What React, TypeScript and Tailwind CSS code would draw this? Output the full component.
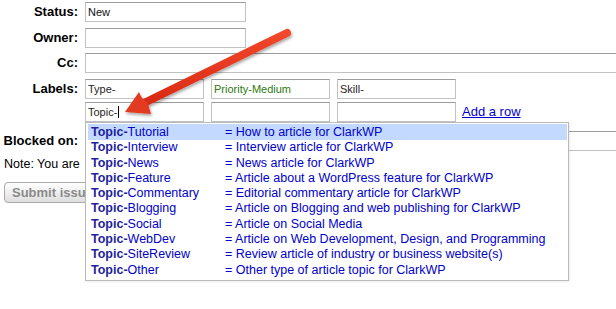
const topics: [string, string][] = [
  ['Tutorial', 'How to article for ClarkWP'],
  ['Interview', 'Interview article for ClarkWP'],
  ['News', 'News article for ClarkWP'],
  ['Feature', 'Article about a WordPress feature for ClarkWP'],
  ['Commentary', 'Editorial commentary article for ClarkWP'],
  ['Blogging', 'Article on Blogging and web publishing for ClarkWP'],
  ['Social', 'Article on Social Media'],
  ['WebDev', 'Article on Web Development, Design, and Programming'],
  ['SiteReview', 'Review article of industry or business website(s)'],
  ['Other', 'Other type of article topic for ClarkWP'],
];

const inputCls =
  'h-[20px] border border-[#c2c2c2] border-t-[#9c9c9c] bg-white px-[2px] text-[11px] leading-[18px] whitespace-nowrap overflow-hidden';

function Label({ children }: { children: React.ReactNode }) {
  return <div className="w-[78px] shrink-0 text-right text-[13px] font-bold text-black">{children}</div>;
}

function Arrow() {
  return (
    <svg className="absolute left-0 top-0 pointer-events-none" width="616" height="309" viewBox="0 0 616 309">
      <defs>
        <linearGradient id="arrowFill" x1="0" y1="0" x2="0" y2="1">
          <stop offset="0" stopColor="#f2472c" />
          <stop offset="1" stopColor="#d92a14" />
        </linearGradient>
        <filter id="arrowShadow" x="-20%" y="-20%" width="140%" height="140%">
          <feDropShadow dx="1" dy="2" stdDeviation="1.6" floodColor="#000" floodOpacity="0.35" />
        </filter>
      </defs>
      <g filter="url(#arrowShadow)">
        <line x1="287" y1="33" x2="146" y2="102" stroke="url(#arrowFill)" strokeWidth="8" strokeLinecap="round" />
        <path d="M125 112 L139 92 Q142 100 148 103 Q149 108 151 114 Z" fill="#e23a20" />
      </g>
    </svg>
  );
}

export default function App() {
  return (
    <div className="relative w-[616px] h-[309px] overflow-hidden bg-white font-['Liberation_Sans',Arial,sans-serif]">
      <div className="pt-[2px]">
        <div className="flex items-center gap-[7px]">
          <Label>Status:</Label>
          <div className={`${inputCls} w-[161px] text-[#111]`}>New</div>
        </div>
        <div className="mt-[6px] flex items-center gap-[7px]">
          <Label>Owner:</Label>
          <div className={`${inputCls} w-[161px]`} />
        </div>
        <div className="mt-[5px] flex items-center gap-[7px]">
          <Label>Cc:</Label>
          <div className={`${inputCls} w-[560px] shrink-0`} />
        </div>
        <div className="mt-[6px] flex items-start gap-[7px]">
          <div className="flex h-[20px] items-center">
            <Label>Labels:</Label>
          </div>
          <div className="flex flex-col gap-[3px]">
            <div className="flex items-center gap-[7px]">
              <div className={`${inputCls} w-[119px] text-[#2a2419]`}>Type-</div>
              <div className={`${inputCls} w-[119px] text-[#2c7a10]`}>Priority-Medium</div>
              <div className={`${inputCls} w-[119px] text-[#2a2419]`}>Skill-</div>
            </div>
            <div className="flex items-center gap-[7px]">
              <div className={`${inputCls} w-[119px] flex items-center text-[#2a2419]`}>
                Topic-
                <span className="ml-[1px] inline-block h-[12px] w-px bg-black" />
              </div>
              <div className={`${inputCls} w-[119px]`} />
              <div className={`${inputCls} w-[119px]`} />
              <a href="#" className="ml-[-1px] text-[13px] text-[#0000cc] underline">
                Add a row
              </a>
            </div>
          </div>
        </div>
        <div className="mt-[9px] flex items-center gap-[7px]">
          <Label>Blocked on:</Label>
          <div className={`${inputCls} w-[560px] shrink-0`} />
        </div>
        <div className="mt-[6px] w-[81px] overflow-hidden whitespace-nowrap pl-[4px] text-[12.5px] leading-[15px] text-black">
          Note: You are
        </div>
        <div className="mt-[8px] pl-[4px]">
          <button className="h-[21px] whitespace-nowrap rounded-[4px] border border-[#aaaaaa] bg-gradient-to-b from-white to-[#dedede] px-[7px] text-[13px] font-bold leading-[19px] text-[#8a8a8a]">
            Submit issue
          </button>
        </div>
      </div>

      <div className="absolute left-[85px] top-[122px] h-[159px] w-[484px] border border-[#b9b9b9] bg-white pl-[2px] pr-[1px] pt-[1px] shadow-[1px_1px_2px_rgba(0,0,0,0.08)]">
        {topics.map(([name, desc], i) => (
          <div
            key={name}
            className={`flex items-center whitespace-nowrap pl-[3px] text-[12.5px] text-[#0000cc] ${
              i === 0 ? 'h-[16px] bg-[#c3d9ff]' : 'h-[15.3px]'
            }`}
          >
            <div className="w-[134px] shrink-0">
              <span className="font-bold text-[#1f1f9e]">Topic-</span>
              {name}
            </div>
            <div>= {desc}</div>
          </div>
        ))}
      </div>

      <Arrow />
    </div>
  );
}
